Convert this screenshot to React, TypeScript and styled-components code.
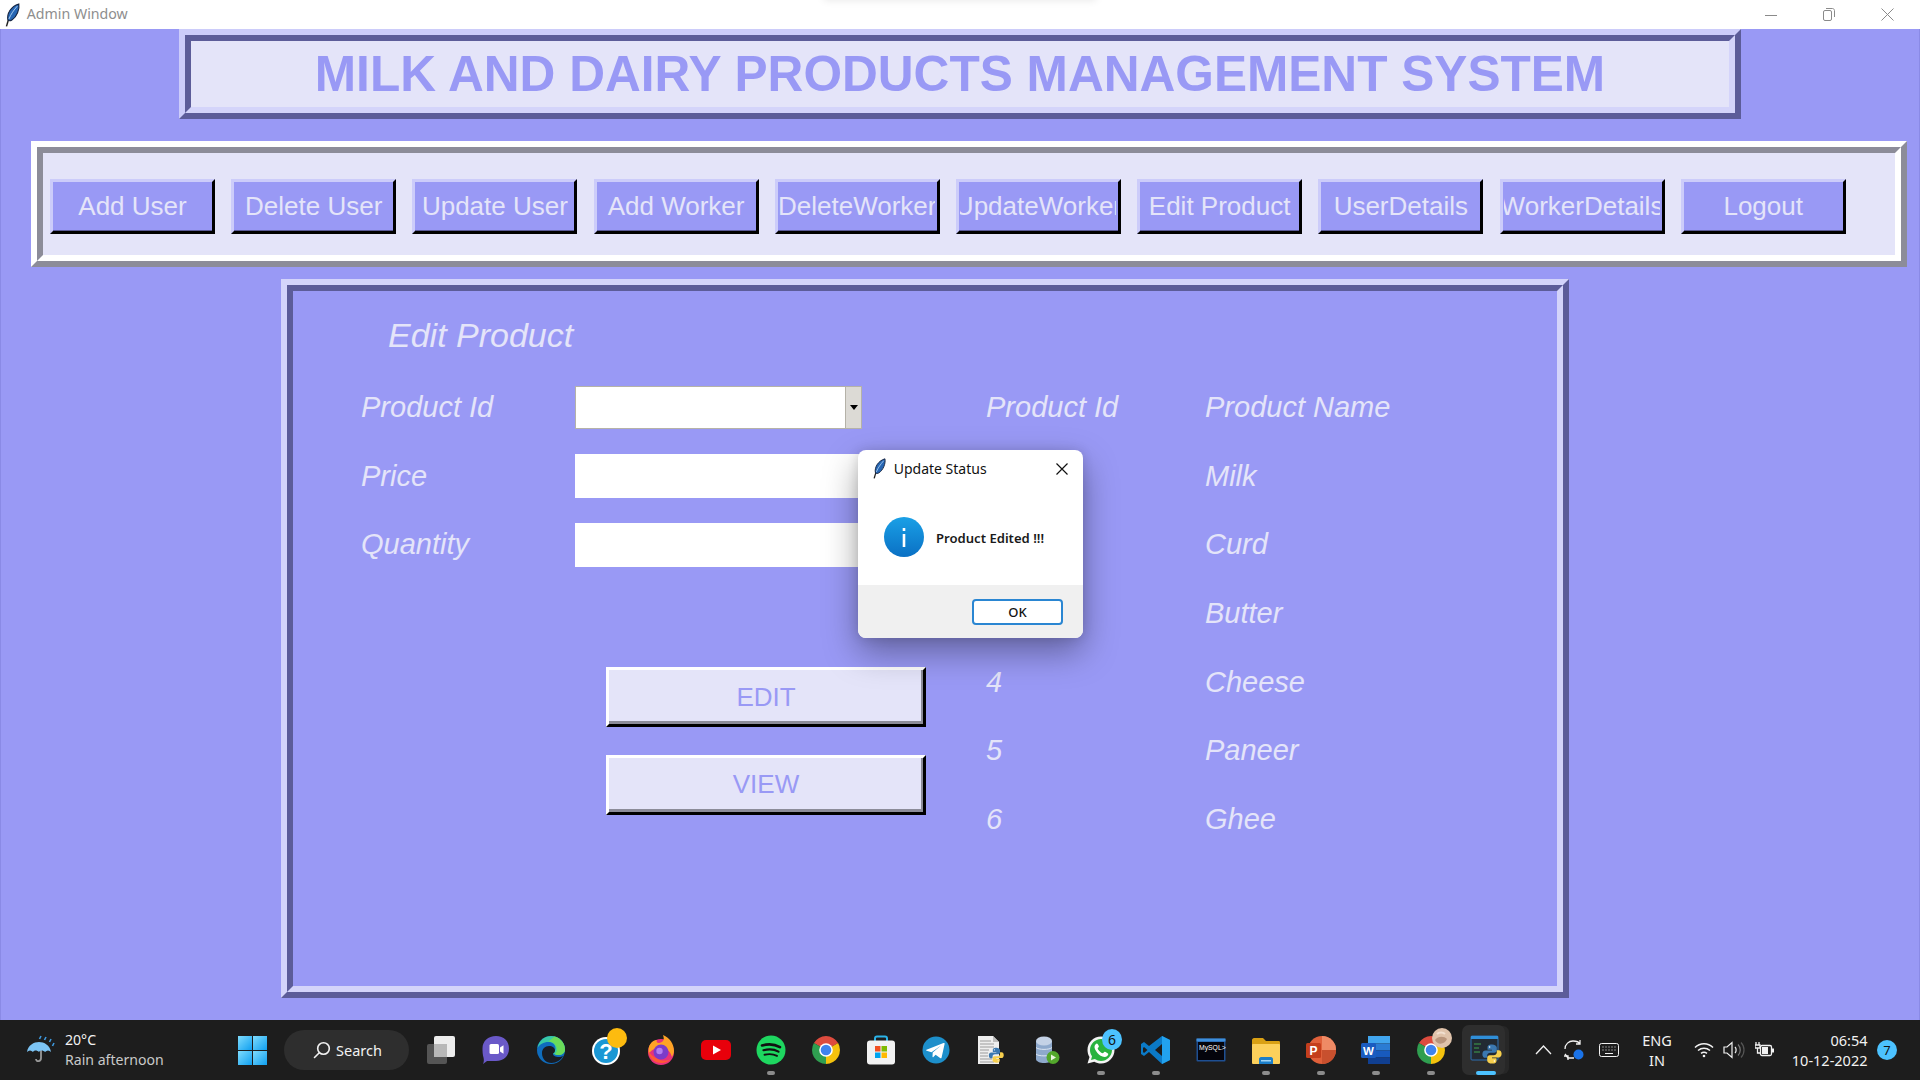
import React from "react";
import styled, { createGlobalStyle } from "styled-components";

const Global = createGlobalStyle`
  html, body { margin: 0; padding: 0; background: #9999f5; }
  * { box-sizing: border-box; }
`;

const Screen = styled.div`
  position: relative;
  width: 1920px;
  height: 1080px;
  overflow: hidden;
  display: flex;
  flex-direction: column;
  font-family: "Liberation Sans", Arial, sans-serif;
`;

/* ---------- window chrome ---------- */
const TitleBar = styled.header`
  position: relative;
  flex: 0 0 29px;
  background: #fff;
  display: flex;
  align-items: center;
  padding: 0 0 0 4px;
  overflow: hidden;
  font-family: "Noto Sans", sans-serif;
`;
const TitleText = styled.span`
  margin: -2px 0 0 6px;
  font-size: 14.2px;
  color: #8e8e8e;
`;
const TopGlow = styled.div`
  position: absolute;
  left: 824px;
  top: -10px;
  width: 272px;
  height: 10px;
  box-shadow: 0 0 8px rgba(0, 0, 0, 0.1);
`;
const WindowControls = styled.div`
  margin-left: auto;
  display: flex;
  align-items: center;
  height: 100%;
  padding-right: 3px;
`;
const WindowControl = styled.div`
  width: 58.5px;
  display: flex;
  justify-content: center;
  color: #8a8a8a;
`;

/* ---------- tk frames ---------- */
const Desk = styled.main`
  flex: 1;
  min-height: 0;
  background: #9999f5;
  border-left: 1px solid #8a8ae6;
  border-right: 1px solid #8a8ae6;
`;
const Groove = styled.div<{ $light: string; $dark: string; $in: string }>`
  border: 6px solid;
  border-color: ${(p) => p.$light} ${(p) => p.$dark} ${(p) => p.$dark} ${(p) => p.$light};
  background: ${(p) => p.$in};
`;
const GrooveInner = styled.div<{ $light: string; $dark: string }>`
  height: 100%;
  border: 6px solid;
  border-color: ${(p) => p.$dark} ${(p) => p.$light} ${(p) => p.$light} ${(p) => p.$dark};
`;
const HeaderFrame = styled(Groove)`
  margin-left: 178px;
  width: 1562px;
  height: 90px;
`;
const HeaderInner = styled(GrooveInner)`
  display: flex;
  align-items: center;
  justify-content: center;
`;
const AppTitle = styled.h1`
  margin: 0;
  font-size: 49.6px;
  font-weight: 700;
  color: #9999f5;
  white-space: nowrap;
`;
const NavFrame = styled(Groove)`
  margin: 22px 0 0 30px;
  width: 1876px;
  height: 126px;
`;
const NavInner = styled(GrooveInner)`
  display: flex;
  gap: 16.2px;
  padding: 26px 0 0 7px;
`;
const NavButton = styled.button`
  flex: 0 0 165px;
  min-width: 0;
  height: 55px;
  padding: 0;
  display: flex;
  align-items: center;
  overflow: hidden;
  white-space: nowrap;
  font: 26px "Liberation Sans", Arial, sans-serif;
  color: #e4e4f9;
  background: #9999f5;
  border: 3px solid;
  border-color: #ccccfa #000 #000 #ccccfa;
  box-shadow: inset 0 -1px 0 #5c5c99;
`;
const NavLabel = styled.span`
  flex: 1;
  min-width: 0;
  margin: 0 1.5px;
  display: flex;
  justify-content: center;
  overflow: hidden;
`;
const PanelFrame = styled(Groove)`
  margin: 12px 0 0 280px;
  width: 1288px;
  height: 719px;
`;
const PanelInner = styled(GrooveInner)`
  padding-top: 9px;
`;
const Heading = styled.h2`
  margin: 0 0 2.4px 95px;
  height: 70.6px;
  display: flex;
  align-items: center;
  font-size: 34px;
  font-weight: 400;
  font-style: italic;
  color: #e4e4f9;
`;
const PanelBody = styled.div`
  display: flex;
  padding-left: 68px;
`;
const FormColumn = styled.div`
  flex: 0 0 625px;
`;
const FieldRow = styled.div`
  height: 68.7px;
  display: flex;
  align-items: center;
`;
const FormText = styled.span`
  font-size: 29px;
  font-style: italic;
  color: #e4e4f9;
`;
const FieldLabel = styled(FormText)`
  flex: 0 0 214px;
`;
const Entry = styled.input`
  width: 287px;
  height: 44px;
  border: 0;
  padding: 0;
  background: #fff;
`;
const Combo = styled.div`
  width: 287px;
  height: 43px;
  display: flex;
  background: #fff;
  border: 1px solid #b5b2a8;
`;
const ComboField = styled.input`
  flex: 1;
  min-width: 0;
  border: 0;
  padding: 0;
  background: #fff;
`;
const ComboArrow = styled.div`
  flex: 0 0 16px;
  display: flex;
  align-items: center;
  justify-content: center;
  background: #dcdad5;
  border-left: 1px solid #b5b2a8;
  &::after {
    content: "";
    border-style: solid;
    border-width: 5px 4px 0 4px;
    border-color: #000 transparent transparent transparent;
  }
`;
const ActionStack = styled.div`
  margin: 88px 0 0 245px;
  display: flex;
  flex-direction: column;
  gap: 27.5px;
`;
const ActionButton = styled.button`
  width: 320px;
  height: 60px;
  padding: 0;
  font: 26px "Liberation Sans", Arial, sans-serif;
  color: #9999f5;
  background: #e4e4f9;
  border: 3px solid;
  border-color: #fff #000 #000 #fff;
  box-shadow: inset -2px -3px 0 #8c8c99;
`;
const ProductTable = styled.div`
  display: grid;
  grid-template-columns: 219px 300px;
  grid-auto-rows: 68.7px;
  align-items: center;
`;

/* ---------- message box ---------- */
const Dialog = styled.div`
  position: absolute;
  left: 858px;
  top: 450px;
  width: 225px;
  height: 188px;
  display: flex;
  flex-direction: column;
  background: #fff;
  border-radius: 8px;
  overflow: hidden;
  font-family: "Noto Sans", sans-serif;
  box-shadow: 0 14px 34px rgba(0, 0, 0, 0.36), 0 0 12px rgba(0, 0, 0, 0.12);
`;
const DialogTitle = styled.div`
  height: 36px;
  margin-bottom: 2px;
  display: flex;
  align-items: center;
  padding: 0 15px 0 14px;
  font-size: 14px;
  color: #111;
`;
const DialogTitleText = styled.span`
  margin-left: 7px;
`;
const DialogClose = styled.span`
  margin: 2px 0 0 auto;
  display: flex;
  color: #111;
`;
const DialogBody = styled.div`
  flex: 1;
  display: flex;
  align-items: center;
  gap: 12px;
  padding: 0 0 0 26px;
  font-size: 13.1px;
  font-weight: 600;
  color: #1a1a1a;
`;
const DialogMessage = styled.span`
  margin-top: 2px;
`;
const DialogFooter = styled.div`
  height: 53px;
  background: #f0f0f0;
  display: flex;
  justify-content: flex-end;
  padding: 14px 20px 0 0;
`;
const OkButton = styled.button`
  width: 91px;
  height: 26px;
  padding: 0;
  background: #fff;
  border: 2px solid #2a86d2;
  border-radius: 4px;
  font: 500 13px "Noto Sans", sans-serif;
  color: #111;
`;

/* ---------- taskbar ---------- */
const Taskbar = styled.footer`
  flex: 0 0 60px;
  background: #1d1d1d;
  display: flex;
  align-items: center;
  font-family: "Noto Sans", sans-serif;
  color: #f2f2f2;
`;
const Weather = styled.div`
  flex: 0 0 224px;
  display: flex;
  align-items: center;
  gap: 9px;
  padding-left: 26px;
`;
const WeatherLines = styled.div`
  display: flex;
  flex-direction: column;
  gap: 2px;
  font-size: 14.1px;
  line-height: 18px;
`;
const WeatherSub = styled.span`
  color: #c9c9c9;
`;
const StartCell = styled.div`
  flex: 0 0 60px;
  padding-left: 14px;
  display: flex;
`;
const SearchPill = styled.div`
  flex: 0 0 125px;
  height: 40px;
  border-radius: 20px;
  background: #2e2e2e;
  display: flex;
  align-items: center;
  gap: 5px;
  padding-left: 29px;
  font-size: 14.5px;
`;
const AppRow = styled.div`
  margin-left: 4.5px;
  display: flex;
`;
const AppCell = styled.div`
  position: relative;
  flex: 0 0 55px;
  height: 50px;
  display: flex;
  align-items: center;
  justify-content: center;
`;
const ActiveCell = styled(AppCell)`
  &::before {
    content: "";
    position: absolute;
    left: 3px;
    right: 9px;
    top: 0;
    bottom: 0;
    border-radius: 7px;
    background: #2e2e2e;
    box-shadow: 5px 0 0 -1px #272727;
  }
  & > svg {
    position: relative;
  }
`;
const RunDot = styled.span<{ $active?: boolean }>`
  position: absolute;
  bottom: 0;
  left: 50%;
  transform: translateX(-50%);
  height: 4px;
  width: ${(p) => (p.$active ? "20px" : "8px")};
  border-radius: 2px;
  background: ${(p) => (p.$active ? "#4cc2ff" : "#8c8c8c")};
`;
const CountBadge = styled.span`
  position: absolute;
  left: 28.5px;
  top: 4px;
  width: 20px;
  height: 21px;
  border-radius: 50%;
  background: #4cc2ff;
  color: #111;
  font-size: 14px;
  line-height: 21px;
  text-align: center;
`;
const AlertDot = styled.span`
  position: absolute;
  left: 28.5px;
  top: 3px;
  width: 20px;
  height: 20px;
  border-radius: 50%;
  background: #fdbb0f;
`;
const TrayCell = styled.div<{ $w: number; $ml?: number }>`
  flex: 0 0 ${(p) => p.$w}px;
  margin-left: ${(p) => p.$ml ?? 0}px;
  display: flex;
  align-items: center;
  justify-content: center;
`;
const LangStack = styled.div`
  font-size: 14.5px;
  line-height: 20px;
  text-align: center;
`;
const Clock = styled.div`
  flex: 0 0 82px;
  text-align: right;
  font-size: 14.5px;
  line-height: 20px;
`;
const NoticeBadge = styled.div`
  margin-left: 9.5px;
  width: 20px;
  height: 20px;
  border-radius: 50%;
  background: #4cc2ff;
  color: #111;
  font-size: 13px;
  display: flex;
  align-items: center;
  justify-content: center;
`;

/* ---------- drawings ---------- */
const Feather = ({ h = 24 }: { h?: number }) => (
  <svg width={h * 0.7} height={h} viewBox="0 0 17 24">
    <path d="M2.500 23.500 L5 15" stroke="#222" strokeWidth="1.500" fill="none" />
    <path d="M4 17 C2.500 11 7 3 15 0.800 C16 6 13 14 8 17 C6.500 18 5 18 4 17Z" fill="#2666b4" stroke="#16243f" strokeWidth="1.100" />
    <path d="M5 16 C7 11 10 7 13.500 3" stroke="#a9cdf0" strokeWidth="1" fill="none" />
  </svg>
);
const Ic = ({ children, s = 30 }: { children: React.ReactNode; s?: number }) => (
  <svg width={s} height={s} viewBox="0 0 30 30">{children}</svg>
);
const Python = () => (
  <g>
    <path d="M15 3c-5 0-5.600 2-5.600 4v2.600H15v1H7C4.200 10.600 3 12.600 3 15.200s1.200 4.600 3.600 4.600h2.400v-3c0-2 1.800-3.400 3.800-3.400h5c1.800 0 3.200-1.400 3.200-3.200V7c0-2.400-2.500-4-6-4z" fill="#3b78b0" />
    <circle cx="12" cy="6.200" r="1" fill="#fff" />
    <path d="M15 27c5 0 5.600-2 5.600-4v-2.600H15v-1h8c2.800 0 4-2 4-4.600s-1.200-4.600-3.600-4.600H21v3c0 2-1.800 3.400-3.800 3.400h-5c-1.800 0-3.200 1.400-3.200 3.200V23c0 2.400 2.500 4 6 4z" fill="#f6cf4d" />
    <circle cx="18" cy="23.800" r="1" fill="#fff" />
  </g>
);
const ChromeLogo = () => (
  <>
    <path d="M15 15L2.900 8A14 14 0 0 1 27.100 8Z" fill="#dd4b3e" />
    <path d="M15 15L27.100 8A14 14 0 0 1 15 29Z" fill="#f4c20d" />
    <path d="M15 15L15 29A14 14 0 0 1 2.900 8Z" fill="#2f9e50" />
    <circle cx="15" cy="15" r="6.800" fill="#fff" />
    <circle cx="15" cy="15" r="5.300" fill="#3f83ee" />
  </>
);

const icons: Record<string, React.ReactNode> = {
  taskview: (
    <Ic>
      <rect x="1" y="9" width="20" height="20" rx="2" fill="#555" />
      <rect x="8" y="1" width="21" height="21" rx="2" fill="#ededed" />
      <rect x="8" y="9" width="13" height="13" fill="#b8b8b8" />
    </Ic>
  ),
  teams: (
    <Ic>
      <path d="M15 1c8 0 13 5 13 12.500S23 26 15 26H6l-4 3c1-2 1-4 .6-6C1.600 20 1.500 16 1.500 13.500 1.500 6 7 1 15 1z" fill="#6a59c8" />
      <rect x="8.500" y="9" width="9.500" height="10" rx="1.500" fill="#fff" />
      <path d="M19 12.500l3.500-2.200v8.400L19 16.500z" fill="#fff" />
    </Ic>
  ),
  edge: (
    <Ic>
      <circle cx="15" cy="15" r="14" fill="#0f6cbd" />
      <path d="M1.500 13C3 5 9 1 15 1c8 0 14 6 14 13.500 0 3.500-3 5.500-6.500 5.500-3 0-5.500-1-6-2.500 2-.5 3-2 3-4C19.500 9.500 16.500 7 12.500 7 7.500 7 3.500 9.500 1.500 13z" fill="#39c9a5" />
      <path d="M18.500 1.500C24.500 3 29 8.500 29 14.500c0 3.500-3 5.500-6.500 5.500-1.500 0-3-.3-4-.8 3-2 3-6 1-9-1.500-2.500-4-3.700-7-3.700 2-1.500 4-3.500 6-5z" fill="#6bdc5a" />
      <path d="M6 18c0-4 3-7 7-7 3.500 0 6 2 6 4.500 0 1.500-1 2.500-2 3-.5 2 2.500 3.500 6 3.500 1.500 0 3-.5 4-1-2 4-6.500 7-11.500 7C10 28 6 24 6 18z" fill="#1a1d24" />
    </Ic>
  ),
  help: (
    <Ic>
      <circle cx="15" cy="16" r="14" fill="#fff" />
      <circle cx="15" cy="16" r="12" fill="#1a97d4" />
      <text x="15" y="24" textAnchor="middle" fontFamily="Liberation Sans" fontWeight="700" fontSize="22" fill="#fff">?</text>
    </Ic>
  ),
  firefox: (
    <Ic>
      <circle cx="15" cy="17" r="13" fill="#e8317b" />
      <path d="M3 18C1 11 6 5 11 5c-1 2 0 3 2 3 6-1 5-5 4-8 7 3 11 9 11 16 0 2-1 4-2 6-3-9-8-10-13-9-5 0-8 3-10 5z" fill="#ffa326" />
      <path d="M2 15c1 9 7 13 13 13 5 0 8-2 10-4-4 2-9 2-13 0-5-2-8-5-10-9z" fill="#ff5a36" />
      <circle cx="15" cy="17" r="7.500" fill="#7b3bc9" />
      <circle cx="13.500" cy="16" r="3.200" fill="#b37df0" />
    </Ic>
  ),
  youtube: (
    <Ic>
      <rect x="0" y="5" width="30" height="20" rx="5" fill="#e8000b" />
      <path d="M12 10.500l8 4.500-8 4.500z" fill="#fff" />
    </Ic>
  ),
  spotify: (
    <Ic>
      <circle cx="15" cy="15" r="14.500" fill="#1ed760" />
      <path d="M6 10.500c6-1.800 13-1.200 18 1.700" stroke="#111" strokeWidth="2.600" strokeLinecap="round" fill="none" />
      <path d="M7.500 15.200c5-1.400 11-.9 15 1.400" stroke="#111" strokeWidth="2.200" strokeLinecap="round" fill="none" />
      <path d="M8.500 19.700c4.500-1 9-.7 12.500 1.200" stroke="#111" strokeWidth="1.900" strokeLinecap="round" fill="none" />
    </Ic>
  ),
  chrome: (
    <Ic>
      <ChromeLogo />
    </Ic>
  ),
  store: (
    <Ic>
      <path d="M9 7V3.500C9 2 10 1.500 11 1.500h8c1 0 2 .5 2 2V7" stroke="#2bb3e8" strokeWidth="2" fill="none" />
      <rect x="1" y="5.500" width="28" height="24" rx="3" fill="#f2f2f2" />
      <rect x="9" y="11" width="5.500" height="5.500" fill="#f25022" />
      <rect x="15.500" y="11" width="5.500" height="5.500" fill="#7fba00" />
      <rect x="9" y="17.500" width="5.500" height="5.500" fill="#00a4ef" />
      <rect x="15.500" y="17.500" width="5.500" height="5.500" fill="#ffb900" />
    </Ic>
  ),
  telegram: (
    <Ic>
      <circle cx="15" cy="15" r="13.500" fill="#1d8fcb" />
      <path d="M5.500 14.800L22.500 8c.8-.3 1.300.2 1.100 1l-3 13.500c-.2.900-.9 1-1.500.6l-4.500-3.300-2.200 2.100c-.4.400-.9.300-.9-.3l.2-4L20 10.500l-9.500 6.700-4.800-1.400c-.8-.3-.8-.8-.2-1z" fill="#fff" />
    </Ic>
  ),
  pyfile: (
    <Ic>
      <path d="M2 1h15l6 6v22H2z" fill="#eeeeee" />
      <path d="M17 1v6h6z" fill="#bdbdbd" />
      <path d="M4 6h11M4 9h14M4 12h14M4 15h9M4 18h8M4 21h8M4 24h12M4 27h14" stroke="#9c9c9c" strokeWidth="1" />
      <g transform="translate(11 11) scale(.62)">
        <Python />
      </g>
    </Ic>
  ),
  db: (
    <Ic>
      <path d="M5 6v18c0 2.500 4 4 8 4s8-1.500 8-4V6z" fill="#8ea9cc" />
      <ellipse cx="13" cy="6" rx="8" ry="4.500" fill="#c4d2e6" />
      <path d="M5 12.500c2 2.500 14 2.500 16 0M5 19c2 2.500 14 2.500 16 0" stroke="#dde6f2" strokeWidth="1" fill="none" />
      <circle cx="22" cy="22.500" r="6.500" fill="#53a82c" />
      <path d="M20 19.500l5 3-5 3z" fill="#e9f6df" />
    </Ic>
  ),
  whatsapp: (
    <Ic>
      <path d="M15 1.500C7.500 1.500 1.500 7.500 1.500 15c0 2.500.7 5 2 7L1.500 28.500l6.800-1.800c2 1 4.300 1.800 6.700 1.800 7.500 0 13.500-6 13.500-13.500S22.500 1.500 15 1.500z" fill="#f4f4f4" />
      <path d="M15 4C9 4 4 9 4 15c0 2.300.7 4.400 2 6.200L5 25l3.900-1c1.800 1.200 3.900 2 6.100 2 6 0 11-5 11-11S21 4 15 4z" fill="#29b33f" />
      <path d="M11 8.500c-.8 0-2.500 1.300-2.500 3.500 0 3 4.500 9.500 10 10 2.200 0 3.800-1.500 3.800-3 0-.6-3-2.300-3.600-2.300-.6 0-1.300 1.500-2 1.500-1.500 0-5-3.500-5-4.700 0-.8 1.200-1.300 1.200-2 0-.6-1.300-3-1.900-3z" fill="#fff" />
    </Ic>
  ),
  vscode: (
    <Ic>
      <path d="M21 1l8 4v20l-8 4-13-12-5 4-3-2v-10l3-2 5 4z" fill="#0b7ac7" />
      <path d="M21 1l8 4v20l-8 4z" fill="#22a2ee" />
      <path d="M21 9l-7 6 7 6z" fill="#1d1d1d" />
      <path d="M3 12l-1 1v4l1 1 3.500-3z" fill="#1d1d1d" />
    </Ic>
  ),
  mysql: (
    <Ic>
      <rect x="0.500" y="3.500" width="29" height="23" rx="1" fill="#1e4f92" />
      <rect x="0.500" y="3.500" width="29" height="3" fill="#3e8fdc" />
      <rect x="2" y="7" width="26" height="18" fill="#04040c" />
      <text x="3" y="15" fontFamily="Liberation Sans" fontSize="6.800" fill="#fff">MySQL&gt;</text>
    </Ic>
  ),
  explorer: (
    <Ic>
      <path d="M1 5c0-1 1-2 2-2h9l3 3h13c1 0 1 1 1 2v3H1z" fill="#d9a014" />
      <rect x="1" y="9" width="28" height="20" rx="1" fill="#fcd05b" />
      <path d="M8 29v-5c0-1 1-2 2-2h10c1 0 2 1 2 2v5z" fill="#1b7ec9" />
      <rect x="10" y="25" width="10" height="1.500" fill="#9fd3f5" />
    </Ic>
  ),
  ppt: (
    <Ic>
      <circle cx="16" cy="15" r="14" fill="#e0603a" />
      <path d="M16 1a14 14 0 0 1 14 14H16z" fill="#ef8a65" />
      <path d="M16 15h14a14 14 0 0 1-14 14z" fill="#c8502e" />
      <rect x="0" y="8" width="15" height="15" rx="1.500" fill="#c43e1c" />
      <text x="7.500" y="20" textAnchor="middle" fontFamily="Liberation Sans" fontWeight="700" fontSize="12" fill="#fff">P</text>
    </Ic>
  ),
  word: (
    <Ic>
      <rect x="7" y="1" width="22" height="7.500" fill="#41a5ee" />
      <rect x="7" y="8.500" width="22" height="7" fill="#2b7cd3" />
      <rect x="7" y="15.500" width="22" height="7" fill="#185abd" />
      <rect x="7" y="22.500" width="22" height="6.500" fill="#103f91" />
      <rect x="0" y="8" width="15" height="15" rx="1.500" fill="#1a5cc0" />
      <text x="7.500" y="20" textAnchor="middle" fontFamily="Liberation Sans" fontWeight="700" fontSize="11.500" fill="#fff">W</text>
    </Ic>
  ),
  chromeProfile: (
    <svg width="44" height="44" viewBox="0 0 44 44">
      <g transform="translate(7 7)">
        <ChromeLogo />
      </g>
      <circle cx="33" cy="10" r="10" fill="#e0c3ab" />
      <path d="M26 12c3-4 9-4 12-1-2 5-9 7-12 1z" fill="#b9957c" />
      <path d="M28 6c2-2 6-2 8 0" stroke="#f1dfd0" strokeWidth="2" fill="none" />
    </svg>
  ),
  idle: (
    <svg width="34" height="34" viewBox="0 0 34 34">
      <rect x="2" y="3" width="27" height="24" rx="1" fill="#222a33" stroke="#2c6fb0" strokeWidth="1" />
      <rect x="2" y="3" width="27" height="3" fill="#2f8fd8" />
      <path d="M5 11h7M5 15h5M5 19h6" stroke="#3fa34d" strokeWidth="1" />
      <g transform="translate(11 9) scale(.8)">
        <Python />
      </g>
    </svg>
  ),
};

const apps: { k: string; dot?: boolean; count?: string; alert?: boolean }[] = [
  { k: "taskview" }, { k: "teams" }, { k: "edge" }, { k: "help", alert: true }, { k: "firefox" },
  { k: "youtube" }, { k: "spotify", dot: true }, { k: "chrome" }, { k: "store" },
  { k: "telegram" }, { k: "pyfile" }, { k: "db" }, { k: "whatsapp", dot: true, count: "6" },
  { k: "vscode", dot: true }, { k: "mysql" }, { k: "explorer", dot: true },
  { k: "ppt", dot: true }, { k: "word", dot: true }, { k: "chromeProfile", dot: true },
];

const navItems = ["Add User", "Delete User", "Update User", "Add Worker", "DeleteWorker", "UpdateWorker", "Edit Product", "UserDetails", "WorkerDetails", "Logout"];
/* ids of rows 1-3 lie under the message box in the picture */
const products: [string, string][] = [
  ["Product Id", "Product Name"], ["", "Milk"], ["", "Curd"], ["", "Butter"],
  ["4", "Cheese"], ["5", "Paneer"], ["6", "Ghee"],
];

export default function App() {
  return (
    <Screen>
      <Global />
      <TitleBar>
        <Feather />
        <TitleText>Admin Window</TitleText>
        <TopGlow />
        <WindowControls>
          <WindowControl>
            <svg width="12" height="12" viewBox="0 0 12 12"><path d="M0 6.500h12" stroke="currentColor" /></svg>
          </WindowControl>
          <WindowControl>
            <svg width="12" height="13" viewBox="0 0 12 13" fill="none" stroke="currentColor"><rect x="0.500" y="2.500" width="8" height="10" rx="1.500" /><path d="M3 .5h6.500c1 0 2 1 2 2V9" /></svg>
          </WindowControl>
          <WindowControl>
            <svg width="13" height="13" viewBox="0 0 13 13" stroke="currentColor"><path d="M.5.5l12 12M12.500.5l-12 12" /></svg>
          </WindowControl>
        </WindowControls>
      </TitleBar>

      <Desk>
        <HeaderFrame $light="#ccccfa" $dark="#5c5c99" $in="#e4e4f9">
          <HeaderInner $light="#d4d4fa" $dark="#5c5c99">
            <AppTitle>MILK AND DAIRY PRODUCTS MANAGEMENT SYSTEM</AppTitle>
          </HeaderInner>
        </HeaderFrame>

        <NavFrame $light="#ffffff" $dark="#8c8c99" $in="#e4e4f9">
          <NavInner $light="#ffffff" $dark="#8c8c99">
            {navItems.map((n) => (
              <NavButton key={n}>
                <NavLabel>{n}</NavLabel>
              </NavButton>
            ))}
          </NavInner>
        </NavFrame>

        <PanelFrame $light="#d4d4fa" $dark="#5c5c99" $in="#9999f5">
          <PanelInner $light="#d4d4fa" $dark="#5c5c99">
            <Heading>Edit Product</Heading>
            <PanelBody>
              <FormColumn>
                <FieldRow>
                  <FieldLabel>Product Id</FieldLabel>
                  <Combo>
                    <ComboField readOnly />
                    <ComboArrow />
                  </Combo>
                </FieldRow>
                <FieldRow>
                  <FieldLabel>Price</FieldLabel>
                  <Entry readOnly />
                </FieldRow>
                <FieldRow>
                  <FieldLabel>Quantity</FieldLabel>
                  <Entry readOnly />
                </FieldRow>
                <ActionStack>
                  <ActionButton>EDIT</ActionButton>
                  <ActionButton>VIEW</ActionButton>
                </ActionStack>
              </FormColumn>
              <ProductTable>
                {products.map(([id, name]) => (
                  <React.Fragment key={name}>
                    <FormText>{id}</FormText>
                    <FormText>{name}</FormText>
                  </React.Fragment>
                ))}
              </ProductTable>
            </PanelBody>
          </PanelInner>
        </PanelFrame>
      </Desk>

      <Taskbar>
        <Weather>
          <svg width="30" height="30" viewBox="0 0 30 30">
            <path d="M15 8v15c0 4-5 4-5 1" stroke="#999" strokeWidth="1.800" fill="none" />
            <path d="M1 17C2 10 8 7 13 7s11 3 12 10c-2-2-4-2-6 0-2-2-5-2-6 0-2-2-5-2-6 0-2-2-4-2-6 0z" fill="#7cc4f4" />
            <path d="M15 1l-1.500 3M20 2l-1.500 3M25 4l-1.500 3M28 8l-1.500 3" stroke="#3f9ae0" strokeWidth="1.600" />
          </svg>
          <WeatherLines>
            <span>20°C</span>
            <WeatherSub>Rain afternoon</WeatherSub>
          </WeatherLines>
        </Weather>
        <StartCell>
          <svg width="29" height="29" viewBox="0 0 29 29">
            <defs>
              <linearGradient id="winTile" x1="0" y1="0" x2="1" y2="1">
                <stop offset="0" stopColor="#7fdcfd" />
                <stop offset="1" stopColor="#0f9ff0" />
              </linearGradient>
            </defs>
            <rect x="0" y="0" width="14" height="14" fill="url(#winTile)" />
            <rect x="15" y="0" width="14" height="14" fill="url(#winTile)" />
            <rect x="0" y="15" width="14" height="14" fill="url(#winTile)" />
            <rect x="15" y="15" width="14" height="14" fill="url(#winTile)" />
          </svg>
        </StartCell>
        <SearchPill>
          <svg width="18" height="18" viewBox="0 0 18 18" fill="none" stroke="#f2f2f2" strokeWidth="1.600">
            <circle cx="10.500" cy="7.500" r="5.800" />
            <path d="M6.300 11.700L1.500 16.500" strokeLinecap="round" />
          </svg>
          Search
        </SearchPill>
        <AppRow>
          {apps.map((a) => (
            <AppCell key={a.k}>
              {icons[a.k]}
              {a.dot && <RunDot />}
              {a.count && <CountBadge>{a.count}</CountBadge>}
              {a.alert && <AlertDot />}
            </AppCell>
          ))}
          <ActiveCell>
            {icons.idle}
            <RunDot $active />
          </ActiveCell>
        </AppRow>
        <TrayCell $w={31} $ml={14}>
          <svg width="17" height="10" viewBox="0 0 17 10" fill="none" stroke="#f2f2f2" strokeWidth="1.300"><path d="M1 9l7.500-8L16 9" /></svg>
        </TrayCell>
        <TrayCell $w={31}>
          <svg width="22" height="22" viewBox="0 0 22 22" fill="none" stroke="#f2f2f2" strokeWidth="1.300">
            <path d="M2 10c0-5 4-8 8-8 3 0 6 1 7 3M17 1v4h-4M2 15l3 4h6" />
            <path d="M1 17h4v4" />
            <circle cx="15.500" cy="15.500" r="5" fill="#1a73e8" stroke="none" />
          </svg>
        </TrayCell>
        <TrayCell $w={39}>
          <svg width="20" height="14" viewBox="0 0 20 14" fill="none" stroke="#f2f2f2">
            <rect x="0.500" y="0.500" width="19" height="13" rx="2" />
            <path d="M3.500 4h1M6.500 4h1M9.500 4h1M12.500 4h1M15.500 4h1M3.500 7h1M6.500 7h1M9.500 7h1M12.500 7h1M15.500 7h1M6 10.500h8" />
          </svg>
        </TrayCell>
        <TrayCell $w={57}>
          <LangStack>ENG<br />IN</LangStack>
        </TrayCell>
        <TrayCell $w={37}>
          <svg width="20" height="16" viewBox="0 0 20 16" fill="none" stroke="#f2f2f2" strokeWidth="1.500">
            <path d="M1 5.500c5-5 13-5 18 0M4 8.500c3.500-3 8.500-3 12 0M7 11.300c2-1.500 4-1.500 6 0" />
            <circle cx="10" cy="14" r="1.300" fill="#f2f2f2" stroke="none" />
          </svg>
        </TrayCell>
        <TrayCell $w={21}>
          <svg width="22" height="18" viewBox="0 0 22 18" fill="none" stroke="#f2f2f2" strokeWidth="1.200">
            <path d="M1 6h3l5-4.500v15L4 12H1z" />
            <path d="M12 6c1.500 1.500 1.500 4.500 0 6" />
            <path d="M15 3.500c3 3 3 8 0 11" stroke="#777" />
            <path d="M18 1.500c4 4 4 11 0 15" stroke="#555" />
          </svg>
        </TrayCell>
        <TrayCell $w={41}>
          <svg width="20" height="16" viewBox="0 0 20 16" fill="none" stroke="#f2f2f2" strokeWidth="1.300">
            <path d="M1 0v3M4 0v3M0 3h5v3H0zM2.500 6v5h3" />
            <rect x="5.500" y="3.500" width="11" height="10" rx="1.500" />
            <rect x="7" y="5" width="6" height="7" fill="#f2f2f2" stroke="none" />
            <path d="M18 6.500v4" strokeWidth="2" />
          </svg>
        </TrayCell>
        <Clock>06:54<br />10-12-2022</Clock>
        <NoticeBadge>7</NoticeBadge>
      </Taskbar>

      <Dialog>
        <DialogTitle>
          <Feather h={21} />
          <DialogTitleText>Update Status</DialogTitleText>
          <DialogClose>
            <svg width="12" height="12" viewBox="0 0 12 12" stroke="currentColor" strokeWidth="1.200"><path d="M.5.5l11 11M11.500.5l-11 11" /></svg>
          </DialogClose>
        </DialogTitle>
        <DialogBody>
          <svg width="40" height="40" viewBox="0 0 40 40">
            <defs>
              <linearGradient id="infoFill" x1="0" y1="0" x2="0" y2="1">
                <stop offset="0" stopColor="#1aa0e6" />
                <stop offset="1" stopColor="#0a70c4" />
              </linearGradient>
            </defs>
            <circle cx="20" cy="20" r="20" fill="url(#infoFill)" />
            <rect x="18.700" y="17" width="2.600" height="13" fill="#fff" />
            <rect x="18.700" y="11" width="2.600" height="3" fill="#fff" />
          </svg>
          <DialogMessage>Product Edited !!!</DialogMessage>
        </DialogBody>
        <DialogFooter>
          <OkButton>OK</OkButton>
        </DialogFooter>
      </Dialog>
    </Screen>
  );
}
